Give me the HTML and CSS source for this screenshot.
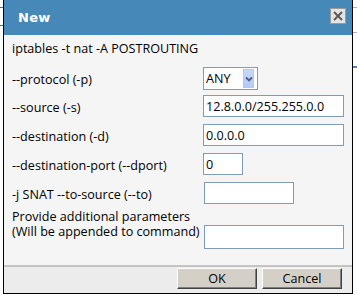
FILE: index.html
```html
<!DOCTYPE html>
<html>
<head>
<meta charset="utf-8">
<link rel="stylesheet" href="styles.css">
</head>
<body>
<div class="page">
  <div class="bg-line bg-l1"></div>
  <div class="bg-line bg-l2"></div>
  <div class="bg-line bg-r1"></div>
  <div class="bg-line bg-r2"></div>
  <div class="bg-line bg-r3"></div>
  <div class="dialog">
    <div class="titlebar">
      <span class="title">New</span>
      <span class="close">
        <svg width="10" height="10" viewBox="0 0 10 10"><path d="M1 1L9 9M9 1L1 9" stroke="#5a5a5a" stroke-width="2"/></svg>
      </span>
    </div>
    <div class="content">
      <div class="cmd">iptables -t nat -A POSTROUTING</div>
      <div class="form">
        <label class="lbl">--protocol (-p)</label>
        <div class="select">
          <span class="sel-text">ANY</span>
          <span class="sel-btn">
            <svg width="8" height="6" viewBox="0 0 8 6"><path d="M1 1.5L4 4.5L7 1.5" fill="none" stroke="#4d5f86" stroke-width="1.8"/></svg>
          </span>
        </div>
        <label class="lbl">--source (-s)</label>
        <input class="inp w-long" type="text" value="12.8.0.0/255.255.0.0">
        <label class="lbl">--destination (-d)</label>
        <input class="inp w-long" type="text" value="0.0.0.0">
        <label class="lbl">--destination-port (--dport)</label>
        <input class="inp w-short" type="text" value="0">
        <label class="lbl">-j SNAT --to-source (--to)</label>
        <input class="inp w-mid" type="text" value="">
        <label class="lbl lbl-2">Provide additional parameters<br>(Will be appended to command)</label>
        <input class="inp w-long inp-last" type="text" value="">
      </div>
    </div>
    <div class="footer">
      <button class="btn">OK</button>
      <button class="btn">Cancel</button>
    </div>
  </div>
</div>
</body>
</html>
```
FILE: styles.css
```css
html, body {
  margin: 0;
  padding: 0;
  background: #ffffff;
}
.page {
  position: relative;
  width: 357px;
  height: 295px;
  overflow: hidden;
  font-family: "Open Sans", "DejaVu Sans", sans-serif;
  font-size: 12.6px;
  color: #000;
}
.bg-line {
  position: absolute;
  height: 1px;
}
.bg-l1 { left: 0; top: 7px; width: 3px; background: #3a6fb0; }
.bg-l2 { left: 0; top: 25px; width: 3px; background: #3a6fb0; }
.bg-r1 { right: 0; top: 7px; width: 4px; background: #b0b0b0; }
.bg-r2 { right: 0; top: 32px; width: 4px; background: #b0b0b0; }
.bg-r3 { right: 0; top: 66px; width: 4px; height: 2px; background: #4a8ab9; }

.dialog {
  position: relative;
  margin-left: 3px;
  width: 348px;
  border-left: 1px solid #000;
  border-right: 1px solid #000;
  border-bottom: 1px solid #000;
  background: #f5f5f5;
}
.titlebar {
  height: 35px;
  background: #4689b8;
  display: flex;
  align-items: center;
  justify-content: space-between;
  padding: 0 6px 0 14px;
}
.title {
  color: #fff;
  font-family: "DejaVu Sans", sans-serif;
  font-weight: bold;
  font-size: 13px;
  letter-spacing: 0.3px;
  margin-top: -1px;
}
.close {
  width: 14px;
  height: 14px;
  background: #e4e4e4;
  border: 1px solid #9a9a9a;
  display: flex;
  align-items: center;
  justify-content: center;
  margin-top: -4px;
}
.content {
  padding: 6px 0 16px 8px;
}
.cmd {
  line-height: 16px;
  height: 16px;
}
.form {
  margin-top: 10px;
  display: grid;
  grid-template-columns: 191px auto;
  row-gap: 7px;
  align-items: center;
  justify-items: start;
}
.lbl {
  line-height: 16px;
  padding-top: 4px;
}
.lbl-2 {
  align-self: start;
  padding-top: 0;
  margin-top: -1px;
  line-height: 14.5px;
}
.select {
  width: 53px;
  height: 21px;
  border: 1px solid #7f9db9;
  background: #fff;
  display: flex;
  align-items: center;
  justify-content: space-between;
  margin-bottom: -2px;
}
.sel-text {
  padding-left: 2px;
}
.sel-btn {
  width: 11px;
  height: 19px;
  margin-right: 3px;
  background: linear-gradient(#c9d8fb, #b4c9f6);
  border: 1px solid #b4c8f3;
  display: flex;
  align-items: center;
  justify-content: center;
  box-sizing: border-box;
}
.inp {
  box-sizing: border-box;
  height: 22px;
  border: 1px solid #7f9db9;
  background: #fff;
  font-family: inherit;
  font-size: 12.6px;
  padding: 0 2px;
  margin: 0;
  color: #000;
  outline: none;
}
.w-long { width: 141px; }
.w-short { width: 40px; }
.w-mid { width: 90px; margin-left: 1px; }
.inp-last {
  margin-top: 14px;
  height: 24px;
  margin-left: 1px;
  width: 140px;
}
.footer {
  border-top: 2px solid #c4c4c4;
  background: #ececec;
  height: 25px;
  display: flex;
  justify-content: flex-end;
  align-items: flex-start;
  gap: 5px;
  padding: 1px 10px 0 0;
}
.btn {
  width: 80px;
  height: 21px;
  background: #d4d0c8;
  border: 1px solid;
  border-color: #ffffff #404040 #404040 #ffffff;
  box-shadow: inset -1px -1px 0 #808080;
  font-family: inherit;
  font-size: 12.6px;
  color: #000;
  padding: 0;
  margin: 0;
}
```
